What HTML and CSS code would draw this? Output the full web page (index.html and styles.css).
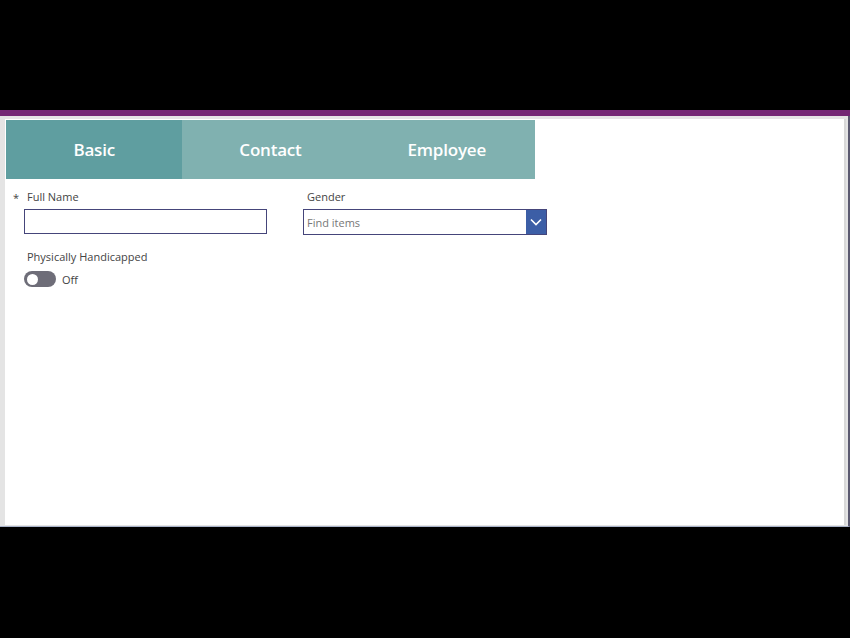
FILE: index.html
```html
<!DOCTYPE html>
<html>
<head>
<meta charset="utf-8">
<link rel="stylesheet" href="styles.css">
</head>
<body>
<div class="screen">
  <div class="top-black"></div>
  <div class="app">
    <div class="purple-bar"></div>
    <div class="frame">
      <div class="canvas">
        <div class="tabs">
          <div class="tab tab-active">Basic</div>
          <div class="tab">Contact</div>
          <div class="tab">Employee</div>
        </div>
        <div class="form">
          <div class="row">
            <div class="field">
              <div class="label"><span class="req">*</span>Full Name</div>
              <div class="input"></div>
            </div>
            <div class="field">
              <div class="label label-combo">Gender</div>
              <div class="combo">
                <span class="placeholder">Find items</span>
                <span class="combo-btn">
                  <svg width="12" height="8" viewBox="0 0 12 8"><path d="M1 1.5 L6 6.5 L11 1.5" fill="none" stroke="#fff" stroke-width="1.6"/></svg>
                </span>
              </div>
            </div>
          </div>
          <div class="field toggle-field">
            <div class="label">Physically Handicapped</div>
            <div class="toggle-row">
              <span class="toggle"><span class="knob"></span></span>
              <span class="toggle-text">Off</span>
            </div>
          </div>
        </div>
      </div>
    </div>
  </div>
  <div class="bottom-black"></div>
</div>
</body>
</html>
```
FILE: styles.css
```css
html, body {
  margin: 0;
  padding: 0;
  background: #000;
  font-family: "Open Sans", "Noto Sans", sans-serif;
}
.screen {
  width: 850px;
  height: 638px;
  display: flex;
  flex-direction: column;
  background: #000;
}
.top-black {
  height: 110px;
  flex: none;
}
.app {
  height: 417px;
  flex: none;
  display: flex;
  flex-direction: column;
}
.purple-bar {
  height: 6px;
  background: #742774;
  flex: none;
}
.frame {
  flex: 1;
  background: #e4e4e4;
  padding: 3px 2px 1px 5px;
  border-right: 2px solid #5b5a70;
  border-bottom: 1px solid #a9b3c9;
  display: flex;
}
.canvas {
  flex: 1;
  background: #fff;
  padding-top: 1px;
  padding-right: 1px;
  border-right: 2px solid #d8d8d8;
}
.tabs {
  display: flex;
  width: 529px;
  height: 59px;
  margin-left: 1px;
}
.tab {
  flex: 1;
  background: #80b1b0;
  color: #fff;
  font-weight: 600;
  font-size: 17px;
  display: flex;
  align-items: center;
  justify-content: center;
  letter-spacing: -0.2px;
}
.tab-active {
  background: #5f9ea0;
}
.form {
  padding: 11px 0 0 19px;
}
.row {
  display: flex;
  gap: 35px;
}
.field {
  width: 244px;
}
.label {
  font-size: 11px;
  color: #444;
  height: 19px;
  padding-left: 3px;
  position: relative;
  line-height: 13px;
}
.label-combo {
  padding-left: 4px;
}
.req {
  position: absolute;
  left: -11px;
  top: 1px;
  color: #444;
}
.input {
  height: 23px;
  border: 1.5px solid #45457a;
  background: #fff;
  box-sizing: content-box;
  width: 241px;
}
.combo {
  height: 24px;
  border: 1px solid #45457a;
  display: flex;
  align-items: center;
  width: 242px;
}
.placeholder {
  flex: 1;
  font-size: 11px;
  color: #777;
  padding-left: 3px;
}
.combo-btn {
  width: 20px;
  height: 24px;
  background: #3c5ea6;
  display: flex;
  align-items: center;
  justify-content: center;
}
.toggle-field {
  margin-top: 15px;
}
.toggle-row {
  display: flex;
  align-items: center;
  gap: 6px;
  margin-top: 2px;
}
.toggle {
  width: 32px;
  height: 16px;
  border-radius: 8px;
  background: #6e6d78;
  display: flex;
  align-items: center;
  padding-left: 3px;
  box-sizing: border-box;
}
.knob {
  width: 11px;
  height: 11px;
  border-radius: 50%;
  background: #fff;
}
.toggle-text {
  font-size: 11px;
  color: #444;
}
.bottom-black {
  flex: 1;
}
```
